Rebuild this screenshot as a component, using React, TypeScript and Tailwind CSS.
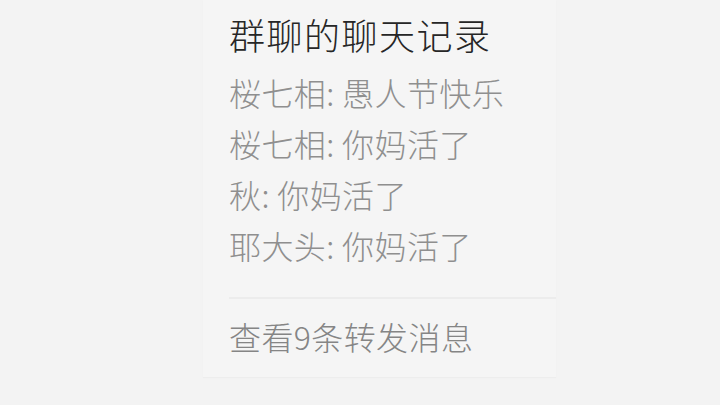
const lines = [
  { name: "桜七相", text: "愚人节快乐" },
  { name: "桜七相", text: "你妈活了" },
  { name: "秋", text: "你妈活了" },
  { name: "耶大头", text: "你妈活了" },
];

function ForwardCard() {
  return (
    <div className="ml-[203px] w-[353px] bg-[#f5f5f5] pl-[26px] pt-[9px] pb-[15px] shadow-[0_1px_1px_rgba(0,0,0,0.025)]">
      <h3 className="text-[36px] leading-[50px] tracking-[1.5px] font-light text-[#262626]">群聊的聊天记录</h3>
      <div className="mt-[8px] flex flex-col">
        {lines.map((l, i) => (
          <p key={i} className="text-[32px] leading-[51px] tracking-[0.4px] font-light text-[#8f8f8f] whitespace-nowrap">
            {l.name}: {l.text}
          </p>
        ))}
      </div>
      <div className="mt-[26px] h-[2px] bg-[#ececec]" />
      <p className="mt-[12px] text-[32px] leading-[51px] tracking-[0.4px] font-light text-[#858585]">查看9条转发消息</p>
    </div>
  );
}

export default function App() {
  return (
    <div
      className="w-[720px] h-[405px] overflow-hidden bg-[#f3f3f3]"
      style={{ fontFamily: '"Noto Sans CJK SC", "Noto Sans", sans-serif' }}
    >
      <ForwardCard />
    </div>
  );
}
